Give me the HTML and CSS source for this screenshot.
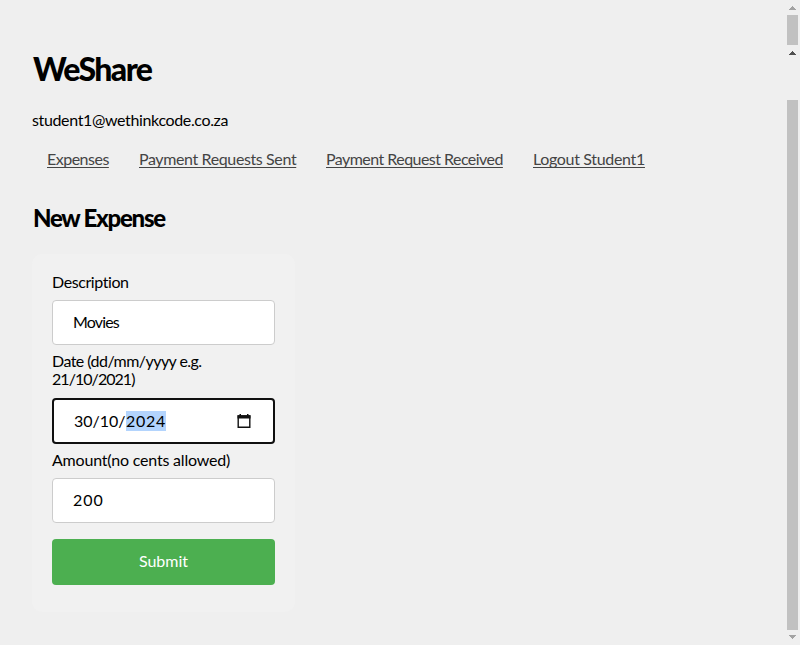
FILE: index.html
```html
<!DOCTYPE html>
<html lang="en">
<head>
<meta charset="utf-8">
<title>WeShare</title>
<link rel="stylesheet" href="styles.css">
</head>
<body>
<main class="page">
  <h1><span class="t-title">WeShare</span></h1>
  <p class="email"><span class="t-email">student1@wethinkcode.co.za</span></p>
  <nav class="nav">
    <a class="n1" href="#">Expenses</a>
    <a class="n2" href="#">Payment Requests Sent</a>
    <a class="n3" href="#">Payment Request Received</a>
    <a class="n4" href="#">Logout Student1</a>
  </nav>
  <h2><span class="t-heading">New Expense</span></h2>
  <form class="card">
    <div class="label"><span class="t-desc">Description</span></div>
    <div class="field"><span class="t-movies">Movies</span></div>
    <div class="label date-label"><span class="t-date">Date (dd/mm/yyyy e.g.</span><br><span class="t-example">21/10/2021)</span></div>
    <div class="field date"><span class="t-day">30/10/</span><span class="year">2024</span>
      <svg class="calendar" width="14" height="14" viewBox="0 0 14 14"><path d="M1.2 2h11.6v11.2H1.2z" fill="none" stroke="#111" stroke-width="1.4"/><path d="M.5 1.3h13v3.2H.5zM2.5 0H4v2H2.5zM10 0h1.5v2H10z" fill="#111"/></svg>
    </div>
    <div class="label"><span class="t-amount">Amount(no cents allowed)</span></div>
    <div class="field"><span class="t-200">200</span></div>
    <button class="submit" type="button"><span class="t-submit">Submit</span></button>
  </form>
</main>
<aside class="scroll">
  <svg class="arrow top" width="7" height="4" viewBox="0 0 7 4" shape-rendering="crispEdges"><path d="M3 0h1v1h1v1h1v1h1v1H0V3h1V2h1V1h1z" fill="#a3a3a3"/></svg>
  <div class="thumb small"></div>
  <svg class="arrow mid" width="7" height="4" viewBox="0 0 7 4" shape-rendering="crispEdges"><path d="M3 0h1v1h1v1h1v1h1v1H0V3h1V2h1V1h1z" fill="#505050"/></svg>
  <div class="thumb large"></div>
  <svg class="arrow bottom" width="7" height="4" viewBox="0 0 7 4" shape-rendering="crispEdges"><path d="M0 0h7v1H6v1H5v1H4v1H3V3H2V2H1V1H0z" fill="#a3a3a3"/></svg>
</aside>
</body>
</html>
```
FILE: styles.css
```css
* { box-sizing: border-box; }
body { margin: 0; height: 645px; overflow: hidden; display: flex; background: #efefef; color: #000; font: 16px/18px Lato, sans-serif; font-variant-ligatures: none; }
span, a { white-space: nowrap; }
.page { width: 784px; padding: 49px 32px 0; }
h1 { margin: 0 0 0 1px; height: 40px; font-size: 32px; line-height: 40px; font-weight: 900; }
.t-title { letter-spacing: -1.6px; }
.email { margin: 22px 0 0; height: 18px; }
.t-email { letter-spacing: -.36px; }
.nav { display: flex; gap: 30px; margin: 21px 0 0 15px; height: 18px; }
.nav a { color: #444; text-underline-offset: 2px; text-decoration-skip-ink: none; }
.n1 { width: 62px; letter-spacing: -.5px; }
.n2 { width: 157px; letter-spacing: -.38px; }
.n3 { width: 177px; letter-spacing: -.54px; }
.n4 { width: 112px; letter-spacing: -.33px; }
h2 { margin: 34px 0 0 1px; height: 32px; font-size: 24px; line-height: 32px; font-weight: 900; }
.t-heading { letter-spacing: -1.25px; }
.card { width: 263px; height: 358px; margin: 20px 0 0; padding: 20px; border-radius: 10px; background: #f1f1f1; }
.label { height: 18px; }
.label span { position: relative; top: -1px; }
.t-desc { letter-spacing: -.42px; }
.t-date { letter-spacing: -.55px; }
.t-example { letter-spacing: -.95px; }
.t-amount { letter-spacing: -.2px; }
.field { display: flex; align-items: center; width: 223px; height: 45px; margin: 8px 0; padding: 0 20px 2px; border: 1px solid #ccc; border-radius: 4px; background: #fff; }
.t-movies { letter-spacing: -.85px; }
.t-200 { letter-spacing: 1px; }
.date-label { height: 36px; }
.date { height: 46px; margin: 9px 0 8px; padding-bottom: 0; border: 2px solid #101010; }
.t-day, .year { height: 20px; line-height: 19px; }
.t-day { width: 52px; }
.year { width: 40px; letter-spacing: .7px; background: #b3d4fd; }
.calendar { margin-left: auto; margin-right: 2px; }
.submit { display: block; width: 223px; height: 46px; margin-top: 16px; padding: 0 0 2px; border: 0; border-radius: 4px; background: #4caf50; color: #fff; font: inherit; }
.scroll { width: 16px; padding-left: 3px; }
.scroll svg, .thumb { display: block; }
.arrow { margin-left: 2px; }
.top { margin-top: 6px; }
.thumb { width: 11px; background: #c1c1c1; }
.small { height: 30px; margin-top: 5px; }
.mid { margin-top: 6px; }
.large { height: 530px; margin-top: 45px; }
.bottom { margin-top: 5px; }
```
